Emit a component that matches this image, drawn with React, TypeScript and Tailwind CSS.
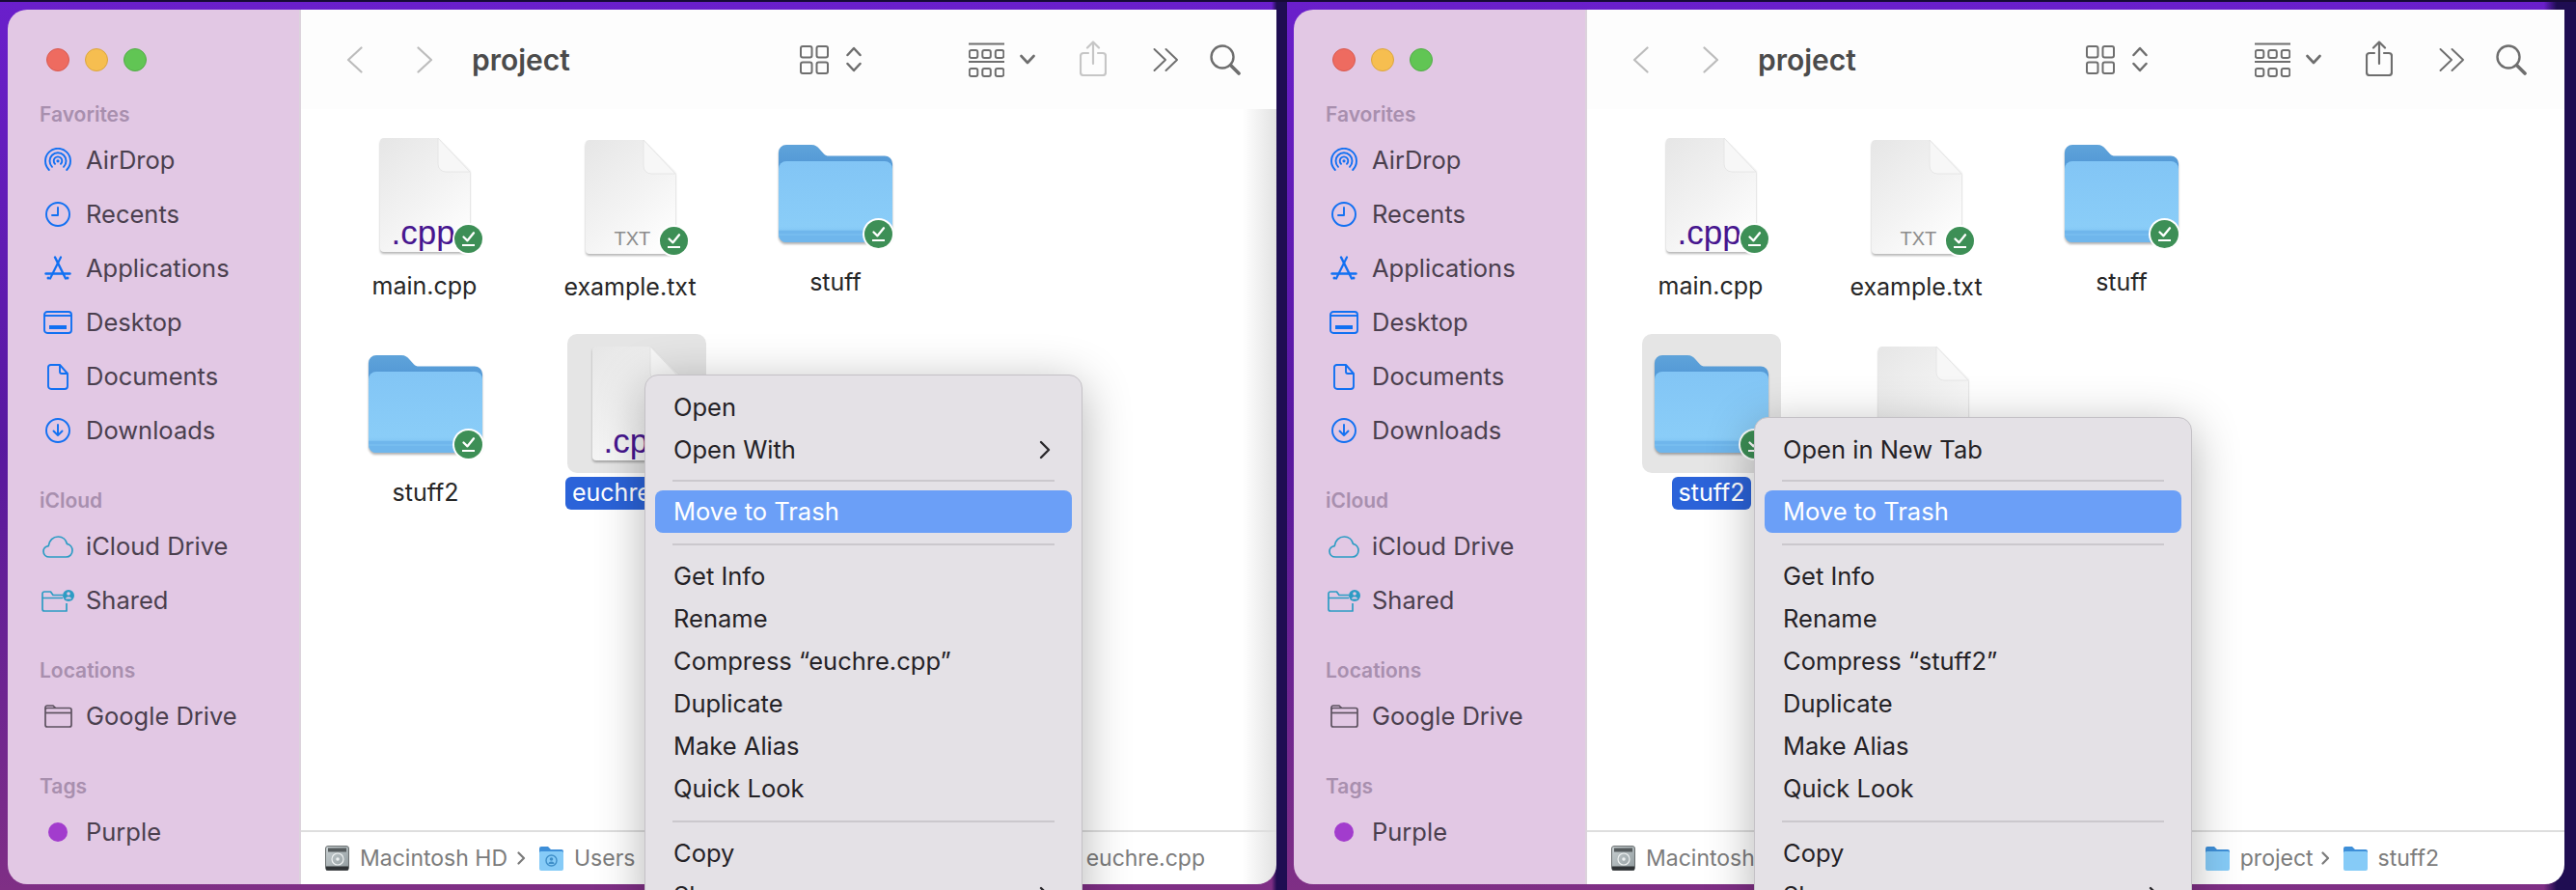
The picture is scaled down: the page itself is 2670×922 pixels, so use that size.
import React from "react";

const BLUE = "#1170f2";
const TEAL = "#2c9cc4";

function AirDropIcon() {
  return (
    <svg width="28" height="27" viewBox="0 0 28 27" fill="none" stroke={BLUE} strokeWidth="1.9" strokeLinecap="round">
      <path d="M4.8 23A13 13 0 1 1 23.2 23" />
      <path d="M8 19.8A8.5 8.5 0 1 1 20 19.8" />
      <path d="M11 16.8A4.3 4.3 0 1 1 17 16.8" />
      <circle cx="14" cy="13.8" r="1.6" fill={BLUE} stroke="none" />
    </svg>
  );
}
function ClockIcon() {
  return (
    <svg width="26" height="26" viewBox="0 0 26 26" fill="none" stroke={BLUE} strokeWidth="1.9" strokeLinecap="round" strokeLinejoin="round">
      <circle cx="13" cy="13" r="12" />
      <path d="M13 6v8H7" />
    </svg>
  );
}
function AppsIcon() {
  return (
    <svg width="28" height="26" viewBox="0 0 28 26" fill="none" stroke={BLUE} strokeWidth="2.4" strokeLinecap="round">
      <path d="M11 1.5 L22 23.5" />
      <path d="M17 1.5 L6 23.5" strokeWidth="2.2" />
      <path d="M1.5 18.5H26.5" />
      <circle cx="4" cy="23" r="1.5" fill={BLUE} stroke="none" />
      <circle cx="24" cy="23" r="1.5" fill={BLUE} stroke="none" />
    </svg>
  );
}
function DesktopIcon() {
  return (
    <svg width="30" height="24" viewBox="0 0 30 24" fill="none" stroke={BLUE} strokeWidth="1.9">
      <rect x="1" y="1" width="28" height="22" rx="3" />
      <path d="M1 5H29" />
      <rect x="6" y="15" width="18" height="4" fill={BLUE} stroke="none" />
    </svg>
  );
}
function DocIcon() {
  return (
    <svg width="22" height="27" viewBox="0 0 22 27" fill="none" stroke={BLUE} strokeWidth="1.9" strokeLinejoin="round">
      <path d="M3.5 1H13L21 10V23a3 3 0 0 1-3 3H4a3 3 0 0 1-3-3V3.5A2.5 2.5 0 0 1 3.5 1Z" />
      <path d="M13 1V8a2 2 0 0 0 2 2H21" />
    </svg>
  );
}
function DownloadIcon() {
  return (
    <svg width="26" height="26" viewBox="0 0 26 26" fill="none" stroke={BLUE} strokeWidth="1.9" strokeLinecap="round" strokeLinejoin="round">
      <circle cx="13" cy="13" r="12" />
      <path d="M13 7v11M8.5 13.5 13 18l4.5-4.5" />
    </svg>
  );
}
function CloudIcon() {
  return (
    <svg width="32" height="23" viewBox="0 0 32 23" fill="none" stroke={TEAL} strokeWidth="1.7" strokeLinejoin="round">
      <path d="M7.5 22C3.6 22 1 19.5 1 16.2c0-3 2.2-5.300 5.200-5.600C7 5 11 1 16.300 1c4.700 0 8.200 3.100 9.100 7.300 3.200.7 5.600 3.700 5.600 7 0 3.800-2.800 6.700-6.500 6.700Z" />
    </svg>
  );
}
function SharedIcon() {
  return (
    <svg width="34" height="23" viewBox="0 0 34 23" fill="none" stroke={TEAL} strokeWidth="1.7" strokeLinejoin="round">
      <path d="M22 8.500H1V20a2 2 0 0 0 2 2H26V14" />
      <path d="M22 5.500H12L9.500 2H3a2 2 0 0 0-2 2V8.500" />
      <circle cx="28" cy="6" r="6" fill={TEAL} stroke="none" />
      <circle cx="28" cy="4" r="1.800" fill="#e2c8e4" stroke="none" />
      <path d="M24.800 9.500a3.300 3 0 0 1 6.400 0Z" fill="#e2c8e4" stroke="none" />
    </svg>
  );
}
function DriveFolderIcon() {
  return (
    <svg width="29" height="24" viewBox="0 0 29 24" fill="none" stroke="#5d5260" strokeWidth="1.700" strokeLinejoin="round">
      <rect x="1" y="3.500" width="27" height="19.500" rx="2" />
      <path d="M1 8.500H28" />
      <path d="M1 5V3a2 2 0 0 1 2-2h6l2.500 2.500" />
    </svg>
  );
}
function PurpleDot() {
  return <div className="h-[20px] w-[20px] rounded-full bg-[#a23ccd]" />;
}

function Chevron({ dir, color }: { dir: "left" | "right"; color: string }) {
  return (
    <svg width="17" height="28" viewBox="0 0 17 28" fill="none" stroke={color} strokeWidth="2.200" strokeLinecap="round" strokeLinejoin="round">
      {dir === "left" ? <path d="M15.500 1.500 2 14l13.500 12.500" /> : <path d="M1.500 1.500 15 14 1.500 26.500" />}
    </svg>
  );
}
function GridIcon() {
  return (
    <svg width="30" height="30" viewBox="0 0 30 30" fill="none" stroke="#6e6e6e" strokeWidth="2">
      <rect x="1" y="1" width="11.500" height="11.500" rx="2" />
      <rect x="17.500" y="1" width="11.500" height="11.500" rx="2" />
      <rect x="1" y="17.500" width="11.500" height="11.500" rx="2" />
      <rect x="17.500" y="17.500" width="11.500" height="11.500" rx="2" />
    </svg>
  );
}
function UpDownIcon() {
  return (
    <svg width="16" height="27" viewBox="0 0 16 27" fill="none" stroke="#6e6e6e" strokeWidth="2.500" strokeLinecap="round" strokeLinejoin="round">
      <path d="M1.500 9 8 2l6.500 7M1.500 18 8 25l6.500-7" />
    </svg>
  );
}
function GroupIcon() {
  const boxes = [0, 13.500, 27];
  return (
    <svg width="37" height="36" viewBox="0 0 37 36" fill="none" stroke="#6e6e6e" strokeWidth="2">
      <path d="M0 1.500H37M0 20H37" />
      {boxes.map((x) => (
        <rect key={`t${x}`} x={x + 0.8} y="8" width="8.500" height="8" rx="2" />
      ))}
      {boxes.map((x) => (
        <rect key={`b${x}`} x={x + 0.8} y="27" width="8.500" height="8" rx="2" />
      ))}
    </svg>
  );
}
function SmallDown() {
  return (
    <svg width="16" height="11" viewBox="0 0 16 11" fill="none" stroke="#6e6e6e" strokeWidth="2.600" strokeLinecap="round" strokeLinejoin="round">
      <path d="M1.500 2 8 9l6.500-7" />
    </svg>
  );
}
function ShareIcon({ color }: { color: string }) {
  return (
    <svg width="28" height="37" viewBox="0 0 28 37" fill="none" stroke={color} strokeWidth="2.200" strokeLinecap="round" strokeLinejoin="round">
      <path d="M9 13H4a3 3 0 0 0-3 3v17a3 3 0 0 0 3 3h20a3 3 0 0 0 3-3V16a3 3 0 0 0-3-3h-5" />
      <path d="M14 24V1.500M8 7.500l6-6 6 6" />
    </svg>
  );
}
function DoubleChevron() {
  return (
    <svg width="26" height="26" viewBox="0 0 26 26" fill="none" stroke="#6e6e6e" strokeWidth="1.900" strokeLinecap="round" strokeLinejoin="round">
      <path d="M1.500 2 13 13 1.500 24M13.500 2 25 13 13.500 24" />
    </svg>
  );
}
function SearchIcon() {
  return (
    <svg width="32" height="32" viewBox="0 0 32 32" fill="none" stroke="#6e6e6e" strokeLinecap="round">
      <circle cx="13" cy="13" r="11.500" strokeWidth="2.400" />
      <path d="M21.500 21.500 30 30" strokeWidth="3.600" />
    </svg>
  );
}

function Badge({ className }: { className: string }) {
  return (
    <div className={`absolute flex h-[33px] w-[33px] items-center justify-center rounded-full bg-white ${className}`}>
      <svg width="29" height="29" viewBox="0 0 29 29">
        <circle cx="14.500" cy="14.500" r="14.500" fill="#3d8f56" />
        <path d="M9.500 12.500l4 3.800 6.500-8" fill="none" stroke="#fff" strokeWidth="2.300" strokeLinecap="round" strokeLinejoin="round" />
        <rect x="8" y="20" width="13" height="2" fill="#fff" />
      </svg>
    </div>
  );
}

function DocShape() {
  return (
    <svg width="93" height="118" viewBox="0 0 93 118" className="drop-shadow-[0_2px_1px_rgba(0,0,0,0.28)]">
      <defs>
        <linearGradient id="docFill" x1="0" y1="0" x2="0.7" y2="1">
          <stop offset="0" stopColor="#e6e6e6" />
          <stop offset="0.6" stopColor="#f3f3f3" />
          <stop offset="1" stopColor="#fdfdfd" />
        </linearGradient>
      </defs>
      <path d="M4 0H60L93 33V114a4 4 0 0 1-4 4H4a4 4 0 0 1-4-4V4a4 4 0 0 1 4-4Z" fill="url(#docFill)" />
      <path d="M60 0L93 35H68a8 8 0 0 1-8-8Z" fill="#f7f7f7" stroke="#e2e2e2" strokeWidth="0.800" />
    </svg>
  );
}

function CppDoc({ badge = true }: { badge?: boolean }) {
  return (
    <div className="relative h-[118px] w-[93px]">
      <DocShape />
      <span className="absolute left-[12px] top-[79px] font-['Liberation_Sans',sans-serif] text-[35px] leading-[38px] text-[#47168f]">
        .cpp
      </span>
      {badge && <Badge className="left-[75px] top-[88px]" />}
    </div>
  );
}
function TxtDoc() {
  return (
    <div className="relative h-[118px] w-[93px]">
      <DocShape />
      <span className="absolute left-[30px] top-[90px] font-['Liberation_Sans',sans-serif] text-[20px] leading-[24px] text-[#8c8c8c]">
        TXT
      </span>
      <Badge className="left-[75px] top-[88px]" />
    </div>
  );
}
function FolderIcon() {
  return (
    <div className="relative h-[101px] w-[118px]">
      <svg width="118" height="101" viewBox="0 0 118 101" className="drop-shadow-[0_2px_1px_rgba(0,0,0,0.3)]">
        <defs>
          <linearGradient id="folderBack" x1="0" y1="0" x2="0" y2="1">
            <stop offset="0" stopColor="#5fa3da" />
            <stop offset="1" stopColor="#3d86cf" />
          </linearGradient>
          <linearGradient id="folderFront" x1="0" y1="0" x2="0" y2="1">
            <stop offset="0" stopColor="#82c5f5" />
            <stop offset="0.8" stopColor="#8acdf8" />
            <stop offset="1" stopColor="#74bbee" />
          </linearGradient>
        </defs>
        <path d="M8 0H34c4 0 6 1.500 8.500 4.500L47 9.500c1.500 1.500 3 2 5 2H110a8 8 0 0 1 8 8V60H0V8a8 8 0 0 1 8-8Z" fill="url(#folderBack)" />
        <path d="M8 17H110a8 8 0 0 1 8 8V93a8 8 0 0 1-8 8H8a8 8 0 0 1-8-8V25a8 8 0 0 1 8-8Z" fill="url(#folderFront)" />
        <path d="M0 88H118V93a8 8 0 0 1-8 8H8a8 8 0 0 1-8-8Z" fill="#6fb6ec" />
        <path d="M0 88.500H118M0 93H118" stroke="#7fc3f2" strokeWidth="1" />
      </svg>
      <Badge className="left-[87px] top-[76px]" />
    </div>
  );
}

function HddIcon() {
  return (
    <svg width="25" height="26" viewBox="0 0 25 26" className="shrink-0">
      <defs>
        <linearGradient id="hdd" x1="0" y1="0" x2="1" y2="1">
          <stop offset="0" stopColor="#c9d0d2" />
          <stop offset="1" stopColor="#8f9a9d" />
        </linearGradient>
      </defs>
      <rect x="0.500" y="0.500" width="24" height="25" rx="2.500" fill="url(#hdd)" stroke="#6a6f70" />
      <rect x="3" y="2.500" width="19" height="4" fill="#555b5d" />
      <circle cx="13" cy="14" r="6" fill="none" stroke="#eef1f1" strokeWidth="1.200" />
      <circle cx="13" cy="14" r="1.800" fill="#eef1f1" />
      <rect x="1" y="21.500" width="23" height="4" fill="#2f3335" />
    </svg>
  );
}
function SmallFolder({ user = false }: { user?: boolean }) {
  return (
    <svg width="25" height="26" viewBox="0 0 25 26" className="shrink-0">
      <path d="M2 1H9l3 3H23a2 2 0 0 1 2 2V12H0V3a2 2 0 0 1 2-2Z" fill="#3e8fd8" />
      <path d="M1.500 6H23.500A1.500 1.500 0 0 1 25 7.500V24a2 2 0 0 1-2 2H2a2 2 0 0 1-2-2V7.500A1.500 1.500 0 0 1 1.500 6Z" fill="#86cbf7" />
      {user && (
        <g>
          <circle cx="12.500" cy="15.500" r="5.500" fill="none" stroke="#3f8fc9" strokeWidth="1.400" />
          <circle cx="12.500" cy="14" r="1.800" fill="#3f8fc9" />
          <path d="M9.500 19a3 2.600 0 0 1 6 0Z" fill="#3f8fc9" />
        </g>
      )}
    </svg>
  );
}
function CrumbArrow() {
  return (
    <svg width="9" height="14" viewBox="0 0 9 14" fill="none" stroke="#7b7b7b" strokeWidth="2.200" strokeLinecap="round" strokeLinejoin="round" className="shrink-0">
      <path d="M1.500 1.500 7 7l-5.500 5.500" />
    </svg>
  );
}

function SidebarSection({ title, items }: { title: string; items: { icon: React.ReactNode; label: string }[] }) {
  return (
    <div className="mt-[31px] first:mt-[46px]">
      <div className="mb-[5px] flex h-[28px] items-center pl-[33px] text-[21px] font-semibold text-[#a88fae]">{title}</div>
      {items.map((it) => (
        <div key={it.label} className="flex h-[56px] items-center pl-[30px]">
          <div className="flex w-[44px] shrink-0 items-center justify-center">{it.icon}</div>
          <span className="ml-[7px] text-[25.500px] text-[#4a3f4e]">{it.label}</span>
        </div>
      ))}
    </div>
  );
}

function Sidebar() {
  return (
    <aside className="h-full w-[304px] shrink-0 rounded-l-[20px] border-r-2 border-[#dcd3dc] bg-[#e2c8e4] pt-[40px]">
      <div className="flex h-[24px] gap-[16px] pl-[40px]">
        <div className="h-[24px] w-[24px] rounded-full border border-[#d85a50] bg-[#ee6b60]" />
        <div className="h-[24px] w-[24px] rounded-full border border-[#dba63e] bg-[#f6be50]" />
        <div className="h-[24px] w-[24px] rounded-full border border-[#52ac47] bg-[#61c554]" />
      </div>
      <SidebarSection
        title="Favorites"
        items={[
          { icon: <AirDropIcon />, label: "AirDrop" },
          { icon: <ClockIcon />, label: "Recents" },
          { icon: <AppsIcon />, label: "Applications" },
          { icon: <DesktopIcon />, label: "Desktop" },
          { icon: <DocIcon />, label: "Documents" },
          { icon: <DownloadIcon />, label: "Downloads" },
        ]}
      />
      <SidebarSection
        title="iCloud"
        items={[
          { icon: <CloudIcon />, label: "iCloud Drive" },
          { icon: <SharedIcon />, label: "Shared" },
        ]}
      />
      <SidebarSection title="Locations" items={[{ icon: <DriveFolderIcon />, label: "Google Drive" }]} />
      <SidebarSection title="Tags" items={[{ icon: <PurpleDot />, label: "Purple" }]} />
    </aside>
  );
}

function Toolbar({ shareColor }: { shareColor: string }) {
  return (
    <div className="flex h-[103px] shrink-0 items-center bg-[#fdfdfd] pl-[47px]">
      <Chevron dir="left" color="#bcbcbc" />
      <div className="ml-[56px]">
        <Chevron dir="right" color="#bcbcbc" />
      </div>
      <div className="ml-[40px] w-[340px] text-[30px] font-semibold leading-none text-[#4b4b4b]">project</div>
      <GridIcon />
      <div className="ml-[18px]">
        <UpDownIcon />
      </div>
      <div className="ml-[111px]">
        <GroupIcon />
      </div>
      <div className="ml-[16px]">
        <SmallDown />
      </div>
      <div className="ml-[46px] -mt-[2px]">
        <ShareIcon color={shareColor} />
      </div>
      <div className="ml-[48px]">
        <DoubleChevron />
      </div>
      <div className="ml-[33px]">
        <SearchIcon />
      </div>
    </div>
  );
}

function MenuRow({ label, arrow = false, active = false }: { label: string; arrow?: boolean; active?: boolean }) {
  return (
    <div
      className={`mx-[10px] flex h-[44px] items-center justify-between rounded-[8px] pl-[19px] pr-[22px] text-[25.500px] ${
        active ? "bg-[#6b9ff7] text-white" : "text-[#242226]"
      }`}
    >
      <span>{label}</span>
      {arrow && (
        <svg width="12" height="20" viewBox="0 0 12 20" fill="none" stroke="#2a282c" strokeWidth="2.400" strokeLinecap="round" strokeLinejoin="round">
          <path d="M2 2l8 8-8 8" />
        </svg>
      )}
    </div>
  );
}
function MenuSep({ className }: { className: string }) {
  return (
    <div className={`mx-[28px] flex items-center ${className}`}>
      <div className="h-[2px] w-full bg-[#cbc8cd]" />
    </div>
  );
}

function ContextMenu({ top, name, className }: { top: React.ReactNode; name: string; className: string }) {
  return (
    <div
      className={`absolute w-[454px] rounded-t-[14px] border border-[#c4c1c6] bg-[#e4e1e6] pt-[11px] shadow-[0_10px_50px_rgba(0,0,0,0.3)] ${className}`}
    >
      {top}
      <MenuSep className="h-[20px]" />
      <MenuRow label="Move to Trash" active />
      <MenuSep className="h-[23px]" />
      <MenuRow label="Get Info" />
      <MenuRow label="Rename" />
      <MenuRow label={`Compress “${name}”`} />
      <MenuRow label="Duplicate" />
      <MenuRow label="Make Alias" />
      <MenuRow label="Quick Look" />
      <MenuSep className="h-[23px]" />
      <MenuRow label="Copy" />
      <MenuRow label="Share" arrow />
    </div>
  );
}

function FileItem({
  icon,
  label,
  className,
  selected = false,
  labelClass = "mt-[4px]",
}: {
  icon: React.ReactNode;
  label: string;
  className: string;
  selected?: boolean;
  labelClass?: string;
}) {
  return (
    <div className={`flex w-[144px] shrink-0 flex-col items-center ${className}`}>
      <div className={`flex h-[144px] w-[144px] items-center justify-center rounded-[10px] ${selected ? "bg-[#e5e5e5]" : ""}`}>
        {icon}
      </div>
      <div
        className={`flex h-[34px] items-center whitespace-nowrap rounded-[6px] px-[7px] text-[25px] ${labelClass} ${
          selected ? "bg-[#2b63d9] text-white" : "text-[#262626]"
        }`}
      >
        {label}
      </div>
    </div>
  );
}

function Grid({ selected }: { selected: "euchre" | "stuff2" }) {
  return (
    <div className="flex-1 bg-transparent">
      <div className="flex h-[233px] pl-[56px]">
        <FileItem icon={<CppDoc />} label="main.cpp" className="mt-[17px]" labelClass="mt-[6px]" />
        <FileItem icon={<TxtDoc />} label="example.txt" className="ml-[69px] mt-[19px]" labelClass="mt-[5px]" />
        <FileItem icon={<FolderIcon />} label="stuff" className="ml-[69px] mt-[15px]" />
      </div>
      <div className="flex pl-[57px]">
        <FileItem icon={<FolderIcon />} label="stuff2" className="" selected={selected === "stuff2"} />
        <FileItem icon={<CppDoc />} label="euchre.cpp" className="ml-[75px]" selected={selected === "euchre"} />
      </div>
    </div>
  );
}

function App() {
  return (
    <div className="flex h-[922px] w-[2670px] overflow-hidden font-['Inter','Liberation_Sans',sans-serif] antialiased">
      <section className="h-full w-[1334px] shrink-0 border-t-2 border-[#170a35] bg-[linear-gradient(90deg,transparent_98.800%,#1f0d52_99.200%),linear-gradient(180deg,#6a1fcb_0%,#58189f_50%,#7f2f85_100%)] pl-[8px] pt-[8px]">
        <div className="relative flex h-[906px] w-[1315px]">
          <Sidebar />
          <div className="flex h-full flex-1 flex-col rounded-r-[20px] bg-[linear-gradient(90deg,#ffffff_96.500%,#e2e2e2_100%)]">
            <Toolbar shareColor="#c6c6c6" />
            <Grid selected="euchre" />
            <div className="flex h-[56px] shrink-0 items-center border-t-2 border-[#dedede] pl-[25px] pr-[74px] text-[23px] text-[#7c7c7c]">
              <HddIcon />
              <span className="ml-[11px] whitespace-nowrap">Macintosh HD</span>
              <div className="ml-[10px]">
                <CrumbArrow />
              </div>
              <div className="ml-[14px]">
                <SmallFolder user />
              </div>
              <span className="ml-[11px]">Users</span>
              <div className="ml-[10px]">
                <CrumbArrow />
              </div>
              <span className="ml-auto">euchre.cpp</span>
            </div>
          </div>
          <ContextMenu
            className="left-[660px] top-[378px]"
            name="euchre.cpp"
            top={
              <>
                <MenuRow label="Open" />
                <MenuRow label="Open With" arrow />
              </>
            }
          />
        </div>
      </section>
      <section className="h-full flex-1 border-t-2 border-[#170a35] bg-[linear-gradient(90deg,transparent_97.500%,#1f0d52_98.500%),linear-gradient(180deg,#6a1fcb_0%,#58189f_50%,#7f2f85_100%)] pl-[7px] pt-[8px]">
        <div className="relative flex h-[906px] w-[1317px]">
          <Sidebar />
          <div className="flex h-full flex-1 flex-col rounded-r-[20px] bg-white">
            <Toolbar shareColor="#6e6e6e" />
            <Grid selected="stuff2" />
            <div className="flex h-[56px] shrink-0 items-center border-t-2 border-[#dedede] pl-[25px] pr-[130px] text-[23px] text-[#7c7c7c]">
              <HddIcon />
              <span className="ml-[11px] whitespace-nowrap">Macintosh HD</span>
              <div className="ml-auto">
                <CrumbArrow />
              </div>
              <div className="ml-[14px]">
                <SmallFolder />
              </div>
              <span className="ml-[11px]">project</span>
              <div className="ml-[8px]">
                <CrumbArrow />
              </div>
              <div className="ml-[14px]">
                <SmallFolder />
              </div>
              <span className="ml-[11px]">stuff2</span>
            </div>
          </div>
          <ContextMenu
            className="left-[477px] top-[422px]"
            name="stuff2"
            top={<MenuRow label="Open in New Tab" />}
          />
        </div>
      </section>
    </div>
  );
}

export default App;
